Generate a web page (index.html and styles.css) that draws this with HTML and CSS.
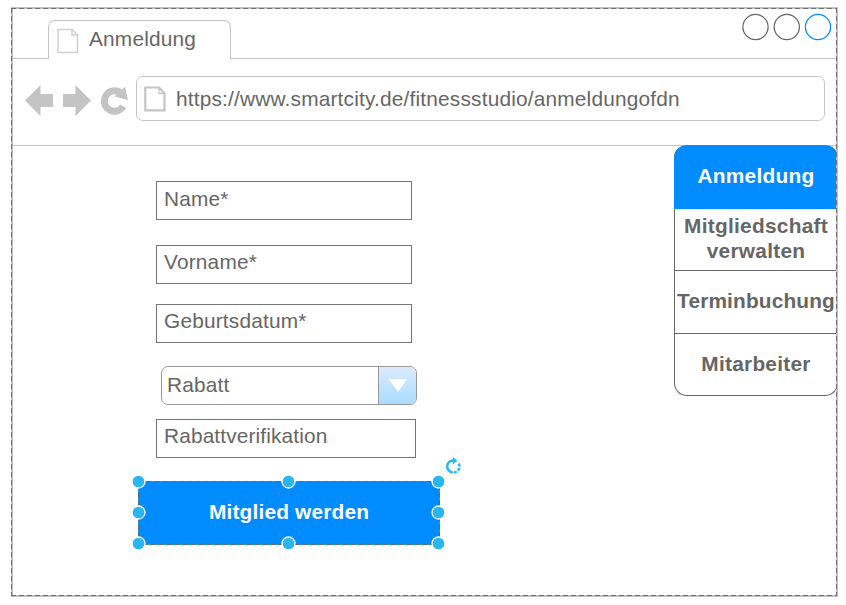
FILE: index.html
```html
<!DOCTYPE html>
<html lang="de">
<head>
<meta charset="utf-8">
<title>Anmeldung</title>
<link rel="stylesheet" href="styles.css">
</head>
<body>
<div class="window">
  <header class="tabs">
    <div class="strip"></div>
    <div class="tab">
      <svg class="tab-icon" width="22" height="26" viewBox="0 0 22 26"><path d="M1 1.500H15L20.500 7V24.500H1Z M15 1.500V7H20.500" fill="none" stroke="#d0d0d0" stroke-width="1.500"/></svg>
      <span>Anmeldung</span>
    </div>
    <div class="strip controls">
      <svg width="92" height="30" viewBox="0 0 92 30" fill="none" stroke="#666" stroke-width="1.250"><circle cx="15.500" cy="15" r="12.600"/><circle cx="46.800" cy="15" r="12.600"/><circle cx="78" cy="15" r="12.600" stroke="#008cff"/></svg>
    </div>
  </header>
  <div class="toolbar">
    <svg class="nav" width="106" height="34" viewBox="0 0 106 34" fill="#c4c4c4">
      <path d="M0 17.500L15.500 2V11H28V24H15.500V33Z"/>
      <path d="M66 17.500L50.500 2V11H38V24H50.500V33Z"/>
      <path d="M98.300 23.300A10.200 10.200 0 1 1 96.500 10.500" fill="none" stroke="#c4c4c4" stroke-width="7"/>
      <path d="M100 3.700L103 17L89.300 13.500Z"/>
    </svg>
    <div class="address">
      <svg width="22" height="26" viewBox="0 0 22 26"><path d="M1.300 1.500H15L20.500 7.500V24.300H1.300Z" fill="none" stroke="#c4c4c4" stroke-width="2.200"/><path d="M15 1V7.500H21" fill="none" stroke="#c4c4c4" stroke-width="1.200"/></svg>
      <span>https://www.smartcity.de/fitnessstudio/anmeldungofdn</span>
    </div>
  </div>
  <main class="page">
    <form class="form">
      <div class="field name">Name*</div>
      <div class="field vorname">Vorname*</div>
      <div class="field geburt">Geburtsdatum*</div>
      <div class="select">
        <span>Rabatt</span>
        <div class="drop"><svg width="18" height="13" viewBox="0 0 18 13"><path d="M0 0H18L9 13Z" fill="#fff"/></svg></div>
      </div>
      <div class="field verif">Rabattverifikation</div>
      <div class="submit">Mitglied werden
        <svg class="selection" width="330" height="96" viewBox="130 454 330 96">
          <rect x="138.500" y="481.500" width="301" height="63" fill="none" stroke="#00a8f0"/>
          <rect x="138.500" y="481.500" width="301" height="63" fill="none" stroke="#666" stroke-dasharray="5 3"/>
          <g fill="#29b6f2" stroke="#fff" stroke-width="1.300">
            <circle cx="138.500" cy="481.500" r="6.500"/><circle cx="288.500" cy="481.500" r="6.500"/><circle cx="438.500" cy="481.500" r="6.500"/>
            <circle cx="138.500" cy="512.500" r="6.500"/><circle cx="438.500" cy="512.500" r="6.500"/>
            <circle cx="138.500" cy="543.500" r="6.500"/><circle cx="288.500" cy="543.500" r="6.500"/><circle cx="438.500" cy="543.500" r="6.500"/>
          </g>
          <g fill="none" stroke="#29b6f2" stroke-width="2.500">
            <path d="M452.800 472.400A6 6 0 0 1 453.500 460.400"/>
            <path d="M458.800 463.500A6 6 0 0 1 454 472.400" stroke-dasharray="3.200 1.300"/>
          </g>
          <path d="M452.800 456.800L457.300 460.800L452.800 464.800Z" fill="#29b6f2"/>
        </svg>
      </div>
    </form>
    <nav class="menu">
      <div class="item active">Anmeldung</div>
      <div class="item">Mitgliedschaft<br>verwalten</div>
      <div class="item tight">Terminbuchung</div>
      <div class="item">Mitarbeiter</div>
    </nav>
  </main>
  <svg class="outline" width="827" height="590" viewBox="0 0 827 590" fill="none">
    <path d="M0 .5H827M1.500 0V590M826.500 0V590M0 589.500H827" stroke="#c0c0c0"/>
    <path d="M0 1.500H826M.5 1V589M825.500 1V589M0 588.500H826" stroke="#c0c0c0"/>
    <path d="M0 1.500H826M.5 1V589M825.500 1V589M0 588.500H826" stroke="#707070" stroke-dasharray="5 3"/>
  </svg>
</div>
</body>
</html>
```
FILE: styles.css
```css
* { box-sizing: border-box; }
body {
  margin: 0;
  background: #fff;
  color: #666;
  font: 20.83px/25px "Liberation Sans", Arial, sans-serif;
  letter-spacing: .19px;
  overflow: hidden;
}
.window {
  position: relative;
  width: 827px;
  height: 590px;
  margin: 7px 0 0 11px;
  display: flex;
  flex-direction: column;
}
.outline { position: absolute; inset: 0; pointer-events: none; }
.tabs { display: flex; height: 52px; align-items: stretch; }
.strip { width: 37px; border-bottom: 1.5px solid #c4c4c4; }
.tab {
  width: 183px;
  margin-top: 13px;
  border: 1.5px solid #c4c4c4;
  border-bottom: 0;
  border-radius: 7px 7px 0 0;
  display: flex;
  align-items: flex-start;
  gap: 10px;
  padding: 5px 0 0 8px;
}
.tab-icon { margin-top: 2px; }
.controls { flex: 1; width: auto; display: flex; justify-content: flex-end; padding: 5px 6px 0 0; }
.toolbar {
  height: 87px;
  border-bottom: 1px solid #c4c4c4;
  display: flex;
  align-items: flex-start;
  padding: 17px 13px 0 14px;
}
.nav { margin-top: 7px; }
.address {
  margin-left: 5px;
  flex: 1;
  height: 45px;
  border: 1.5px solid #c4c4c4;
  border-radius: 7px;
  display: flex;
  align-items: center;
  gap: 10px;
  padding-left: 7px;
}
.page { flex: 1; display: flex; justify-content: space-between; }
.form { margin-left: 127px; display: flex; flex-direction: column; }
.field {
  width: 256px;
  height: 39px;
  margin-left: 18px;
  border: 1.3px solid #757575;
  padding: 4px 7px;
}
.name { margin-top: 35px; }
.vorname { margin-top: 25px; padding-top: 3px; }
.geburt { margin-top: 20px; padding-top: 3px; }
.verif { margin-top: 14px; width: 260px; padding-top: 3px; letter-spacing: .14px; }
.select {
  width: 256px;
  height: 39px;
  margin: 23px 0 0 23px;
  border: 1.3px solid #999;
  border-radius: 7px;
  display: flex;
  justify-content: space-between;
  overflow: hidden;
}
.select span { padding: 5px 0 0 5px; }
.drop {
  width: 38px;
  border-left: 1.3px solid #999;
  background: linear-gradient(#dbebff, #a9dcff);
  display: flex;
  align-items: center;
  justify-content: center;
}
.submit {
  position: relative;
  width: 302px;
  height: 64px;
  margin-top: 23px;
  border-radius: 7px;
  background: #008cff;
  color: #fff;
  font-weight: bold;
  line-height: 62px;
  text-align: center;
}
.selection { position: absolute; left: -8px; top: -27px; overflow: visible; }
.menu {
  width: 164px;
  height: 251px;
  margin-top: -1px;
  display: grid;
  grid-template-rows: 64px 62px 63px 62px;
  background: #fff;
  border: 1.5px solid #666;
  border-top: 0;
  border-radius: 13px;
  font-weight: bold;
  letter-spacing: .27px;
  text-align: center;
}
.item {
  display: flex;
  align-items: center;
  justify-content: center;
  border-bottom: 1.5px solid #666;
  padding-bottom: 3px;
}
.tight { letter-spacing: .15px; }
.item:last-child { border-bottom: 0; padding-bottom: 4px; }
.active { background: #008cff; color: #fff; border: 0; margin: 0 -1px; border-radius: 13px 13px 0 0; }
```
